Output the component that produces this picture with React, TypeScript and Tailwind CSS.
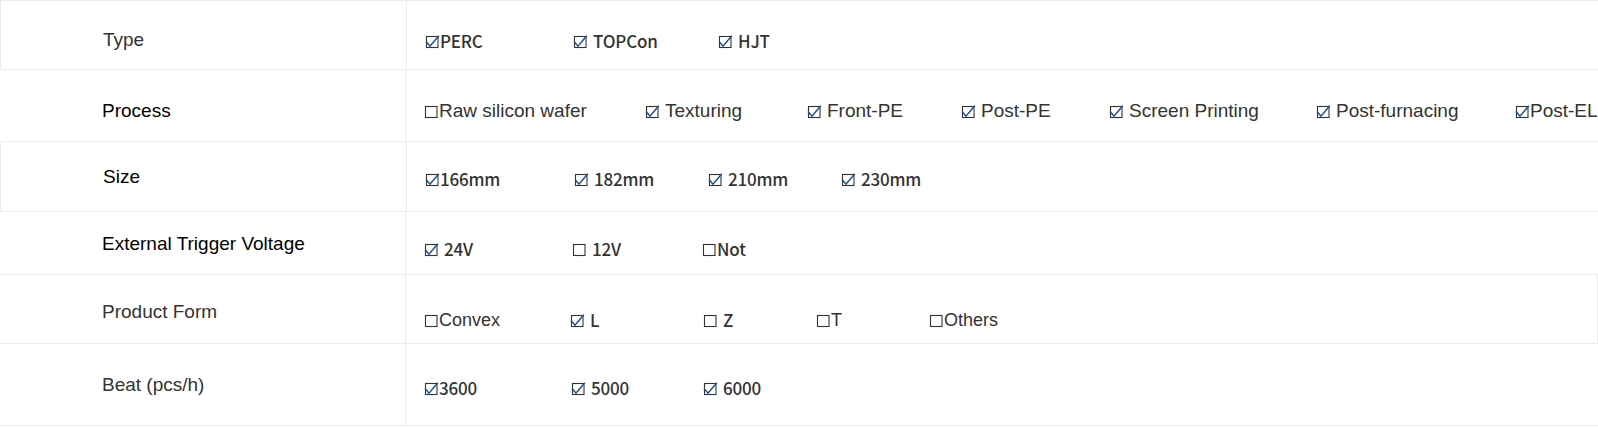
type Opt = { t: string; on: boolean; sp?: boolean; w?: string; f?: "y" | "a" };

type Row = {
  label: string;
  labelTone: string;
  rowCls: string;
  labelPad: string;
  valuePad: string;
  font: "y" | "a";
  opts: Opt[];
};

const rows: Row[] = [
  {
    label: "Type",
    labelTone: "text-[#333]",
    rowCls: "h-[70px] border-t border-l",
    labelPad: "pt-[29px]",
    valuePad: "pt-[30px]",
    font: "y",
    opts: [
      { t: "PERC", on: true, w: "w-[148px]" },
      { t: "TOPCon", on: true, sp: true, w: "w-[145px]" },
      { t: "HJT", on: true, sp: true },
    ],
  },
  {
    label: "Process",
    labelTone: "text-[#000]",
    rowCls: "h-[72px]",
    labelPad: "pt-[31px]",
    valuePad: "pt-[31px]",
    font: "a",
    opts: [
      { t: "Raw silicon wafer", on: false, w: "w-[221px]" },
      { t: "Texturing", on: true, sp: true, w: "w-[162px]" },
      { t: "Front-PE", on: true, sp: true, w: "w-[154px]" },
      { t: "Post-PE", on: true, sp: true, w: "w-[148px]" },
      { t: "Screen Printing", on: true, sp: true, w: "w-[207px]" },
      { t: "Post-furnacing", on: true, sp: true, w: "w-[199px]" },
      { t: "Post-EL", on: true },
    ],
  },
  {
    label: "Size",
    labelTone: "text-[#000]",
    rowCls: "h-[70px] border-l",
    labelPad: "pt-[25px]",
    valuePad: "pt-[27px]",
    font: "y",
    opts: [
      { t: "166mm", on: true, w: "w-[149px]" },
      { t: "182mm", on: true, sp: true, w: "w-[134px]" },
      { t: "210mm", on: true, sp: true, w: "w-[133px]" },
      { t: "230mm", on: true, sp: true },
    ],
  },
  {
    label: "External Trigger Voltage",
    labelTone: "text-[#000]",
    rowCls: "h-[63px]",
    labelPad: "pt-[22px]",
    valuePad: "pt-[27px]",
    font: "y",
    opts: [
      { t: "24V", on: true, sp: true, w: "w-[148px]" },
      { t: "12V", on: false, sp: true, w: "w-[130px]" },
      { t: "Not", on: false },
    ],
  },
  {
    label: "Product Form",
    labelTone: "text-[#333]",
    rowCls: "h-[69px] border-r",
    labelPad: "pt-[27px]",
    valuePad: "pt-[35px]",
    font: "y",
    opts: [
      { t: "Convex", on: false, w: "w-[146px]", f: "a" },
      { t: "L", on: true, sp: true, w: "w-[133px]" },
      { t: "Z", on: false, sp: true, w: "w-[113px]" },
      { t: "T", on: false, w: "w-[113px]", f: "a" },
      { t: "Others", on: false, f: "a" },
    ],
  },
  {
    label: "Beat (pcs/h)",
    labelTone: "text-[#333]",
    rowCls: "h-[82px]",
    labelPad: "pt-[31px]",
    valuePad: "pt-[34px]",
    font: "y",
    opts: [
      { t: "3600", on: true, w: "w-[147px]" },
      { t: "5000", on: true, sp: true, w: "w-[132px]" },
      { t: "6000", on: true, sp: true },
    ],
  },
];

function Box({ on }: { on: boolean }) {
  return (
    <svg width="15" height="15" viewBox="0 0 15 15" className="shrink-0">
      <rect x="1.5" y="2.5" width="11.5" height="11" fill="none" stroke="#333" strokeWidth="1.1" />
      {on && (
        <polyline
          points="1,7.5 5,12.2 13.8,1.8"
          fill="none"
          stroke="#1d4f91"
          strokeWidth="1.5"
        />
      )}
    </svg>
  );
}

export default function App() {
  return (
    <div className="w-[1598px] h-[427px] bg-white font-['Liberation_Sans',Arial,sans-serif]">
      {rows.map((r) => (
        <div key={r.label} className={`flex border-b border-[#ececec] ${r.rowCls}`}>
          {/* label cell */}
          <div className={`w-[406px] shrink-0 border-r border-[#ececec] pl-[102px] text-[19px] leading-[20px] ${r.labelTone} ${r.labelPad}`}>
            {r.label}
          </div>
          {/* options */}
          <div className={`flex flex-1 pl-[18px] ${r.valuePad}`}>
            {r.opts.map((o) => {
              const yahei = (o.f ?? r.font) === "y";
              const size = r.font === "a" ? "text-[19px]" : "text-[18px]";
              return (
                <span key={o.t} className={`flex items-center h-[20px] shrink-0 ${o.w ?? ""}`}>
                  <Box on={o.on} />
                  <span
                    className={`whitespace-nowrap leading-[20px] text-[#333] ${o.sp ? "ml-[5px]" : ""} ${
                      yahei
                        ? "font-['Noto_Sans_CJK_SC','Noto_Sans',sans-serif] text-[17px] font-medium tracking-[-0.2px]"
                        : `font-['Liberation_Sans',Arial,sans-serif] ${size}`
                    }`}
                  >
                    {o.t}
                  </span>
                </span>
              );
            })}
          </div>
        </div>
      ))}
    </div>
  );
}
